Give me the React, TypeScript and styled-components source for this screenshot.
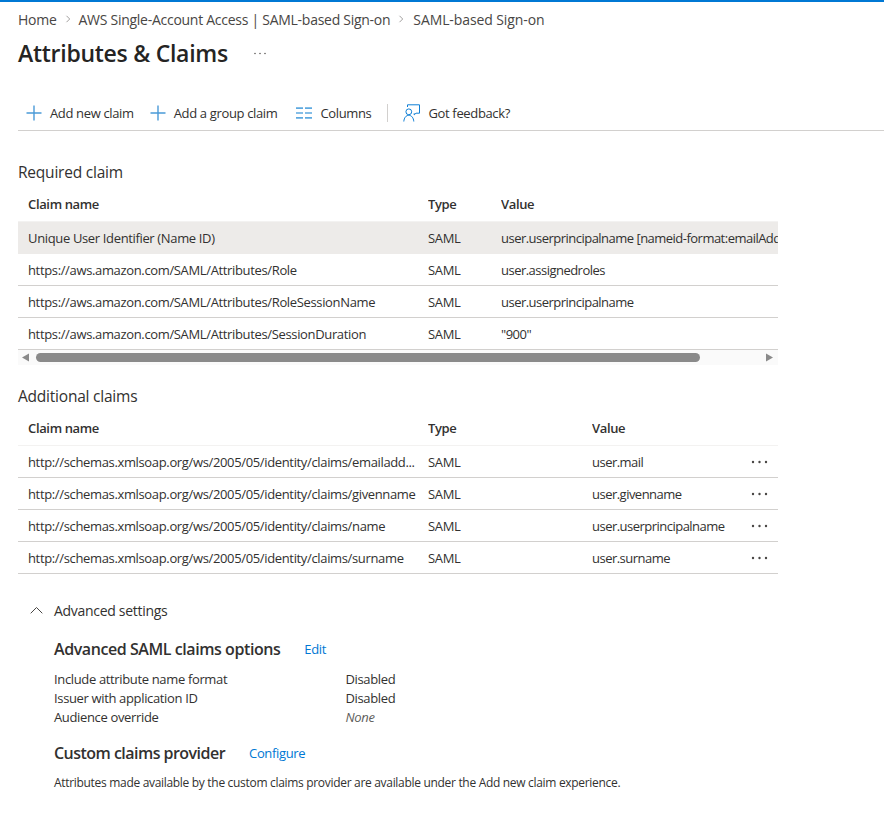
import styled, { createGlobalStyle } from "styled-components";

const GlobalStyle = createGlobalStyle`
  html, body {
    margin: 0;
    background: #fff;
  }
  body {
    font-family: "Open Sans", "Noto Sans", "Liberation Sans", sans-serif;
    font-size: 13px;
    letter-spacing: -0.35px;
    color: #323130;
  }
`;

const Page = styled.div`
  width: 884px;
  height: 816px;
  overflow: hidden;
  border-top: 2px solid #0078d4;
  box-sizing: border-box;
`;
const Breadcrumb = styled.nav`
  display: flex;
  align-items: center;
  height: 18px;
  padding: 8px 0 0 18px;
  color: #484644;
  font-size: 14px;
  letter-spacing: -0.27px;
`;
const Chevron = styled.svg`
  width: 6px;
  height: 8px;
  margin: 0 8px;
`;
const LastCrumb = styled.span`
  margin-left: 1px;
  letter-spacing: -0.1px;
`;
const TitleRow = styled.div`
  display: flex;
  align-items: center;
  padding: 5px 0 0 18px;
  height: 40px;
`;
const Title = styled.h1`
  margin: 0;
  font-size: 23px;
  font-weight: 600;
  letter-spacing: -0.27px;
  color: #252423;
`;
const TitleMore = styled.svg`
  width: 12px;
  height: 3px;
  margin-left: 26px;
`;
const Toolbar = styled.div`
  display: flex;
  align-items: center;
  height: 35px;
  margin: 22px 0 0 18px;
  padding-left: 8px;
  border-bottom: 1px solid #d2d0ce;
`;
const ToolButton = styled.div<{ $after: number }>`
  display: flex;
  align-items: center;
  gap: 8px;
  margin-right: ${(p) => p.$after}px;
  color: #323130;
  svg {
    flex: none;
  }
`;
const ToolDivider = styled.div`
  width: 1px;
  height: 18px;
  background: #d2d0ce;
  margin-right: 15px;
`;
const Content = styled.main`
  padding: 31px 0 0 18px;
  width: 760px;
`;
const SectionTitle = styled.h2`
  margin: 0 0 2px;
  font-size: 15.5px;
  font-weight: 400;
  line-height: 20px;
  color: #323130;
  letter-spacing: -0.22px;
`;
const Row = styled.div<{ $columns: string; $header?: boolean; $selected?: boolean }>`
  display: grid;
  grid-template-columns: ${(p) => p.$columns};
  align-items: center;
  height: ${(p) => (p.$header ? "35px" : "31px")};
  padding: ${(p) => (p.$header ? "2px" : "0")} 0 0 10px;
  border-bottom: 1px solid ${(p) => (p.$selected ? "#edebe9" : p.$header ? "#f3f2f1" : "#d2d0ce")};
  background: ${(p) => (p.$selected ? "#edebe9" : "transparent")};
  font-weight: ${(p) => (p.$header ? 600 : 400)};
  white-space: nowrap;
  overflow: hidden;
`;
const Cell = styled.div`
  overflow: hidden;
  white-space: nowrap;
`;
const ValueCell = styled(Cell)`
  letter-spacing: -0.52px;
`;
const MoreDots = styled.svg`
  width: 17px;
  height: 4px;
  display: block;
  justify-self: start;
`;
const ScrollBar = styled.div`
  display: flex;
  align-items: center;
  height: 15px;
  background: #fafafa;
  padding: 0 4px 0 3px;
  margin-bottom: 21px;
`;
const ScrollArrow = styled.svg`
  width: 9px;
  height: 9px;
  flex: none;
`;
const ScrollTrack = styled.div`
  flex: 1;
  margin: 0 0 0 6px;
`;
const ScrollThumb = styled.div`
  width: 664px;
  height: 9px;
  border-radius: 5px;
  background: #8a8a8a;
`;
const Advanced = styled.section`
  padding-left: 12px;
  margin-top: 26px;
`;
const ExpandRow = styled.div`
  display: flex;
  align-items: center;
  gap: 11px;
  height: 20px;
  font-size: 14px;
  letter-spacing: -0.3px;
`;
const Details = styled.div`
  padding: 17px 0 0 24px;
`;
const OptionHeading = styled.div`
  display: flex;
  align-items: center;
  height: 24px;
`;
const OptionTitle = styled.h3`
  margin: 0;
  font-size: 16px;
  font-weight: 600;
  letter-spacing: -0.43px;
  color: #323130;
  margin-right: 24px;
`;
const CustomTitle = styled(OptionTitle)`
  letter-spacing: -0.53px;
`;
const Link = styled.a`
  color: #0078d4;
  font-size: 13px;
`;
const OptionGrid = styled.dl`
  display: grid;
  grid-template-columns: 291.5px 1fr;
  grid-auto-rows: 19px;
  align-items: center;
  margin: 8px 0 15px;
  dt, dd {
    margin: 0;
  }
`;
const NoneValue = styled.dd`
  font-style: italic;
  color: #605e5c;
`;
const Note = styled.p`
  margin: 10px 0 0;
  font-size: 12px;
  line-height: 16px;
  letter-spacing: -0.31px;
`;

const RightChevron = () => (
  <Chevron viewBox="0 0 6 8">
    <path d="M1.5 .8 4.7 4 1.5 7.2" fill="none" stroke="#8a8886" strokeWidth="0.8" />
  </Chevron>
);
const PlusIcon = () => (
  <svg width="16" height="16" viewBox="0 0 16 16">
    <path d="M8 .5v15M.5 8h15" stroke="#4a9ad8" strokeWidth="1.4" fill="none" />
  </svg>
);
const ColumnsIcon = () => (
  <svg width="16" height="12" viewBox="0 0 16 12">
    <path d="M0 1.200h7M9 1.200h7M0 6h7M9 6h7M0 10.800h7M9 10.800h7" stroke="#5ea9e0" strokeWidth="1.700" fill="none" />
  </svg>
);
const FeedbackIcon = () => (
  <svg width="17" height="18" viewBox="0 0 17 18" fill="none" stroke="#0f7fd6" strokeWidth="1">
    <path d="M4.500 3V.8h12v8.400h-3.500l-1.800 1.700V9.200" />
    <circle cx="5.800" cy="7.800" r="2.900" />
    <path d="M.8 17.500c.3-3.800 2.300-6.200 5-6.200s4.700 2.400 5 6.200" />
  </svg>
);
const Dots = () => (
  <MoreDots viewBox="0 0 17 4">
    <circle cx="2" cy="2" r="1.200" fill="#484644" />
    <circle cx="8.500" cy="2" r="1.200" fill="#484644" />
    <circle cx="15" cy="2" r="1.200" fill="#484644" />
  </MoreDots>
);

const requiredColumns = "400px 73px 1fr";
const additionalColumns = "400px 164px 159px 1fr";

const requiredRows = [
  ["https://aws.amazon.com/SAML/Attributes/Role", "user.assignedroles"],
  ["https://aws.amazon.com/SAML/Attributes/RoleSessionName", "user.userprincipalname"],
  ["https://aws.amazon.com/SAML/Attributes/SessionDuration", '"900"'],
];
const additionalRows = [
  ["http://schemas.xmlsoap.org/ws/2005/05/identity/claims/emailadd...", "user.mail"],
  ["http://schemas.xmlsoap.org/ws/2005/05/identity/claims/givenname", "user.givenname"],
  ["http://schemas.xmlsoap.org/ws/2005/05/identity/claims/name", "user.userprincipalname"],
  ["http://schemas.xmlsoap.org/ws/2005/05/identity/claims/surname", "user.surname"],
];

const App = () => {
  return (
    <>
      <GlobalStyle />
      <Page>
        <Breadcrumb>
          <span>Home</span>
          <RightChevron />
          <span>AWS Single-Account Access | SAML-based Sign-on</span>
          <RightChevron />
          <LastCrumb>SAML-based Sign-on</LastCrumb>
        </Breadcrumb>
        <TitleRow>
          <Title>Attributes &amp; Claims</Title>
          <TitleMore viewBox="0 0 12 3">
            <circle cx="1" cy="1.500" r="0.800" fill="#605e5c" />
            <circle cx="6" cy="1.500" r="0.800" fill="#605e5c" />
            <circle cx="11" cy="1.500" r="0.800" fill="#605e5c" />
          </TitleMore>
        </TitleRow>
        <Toolbar>
          <ToolButton $after={16}><PlusIcon />Add new claim</ToolButton>
          <ToolButton $after={19}><PlusIcon />Add a group claim</ToolButton>
          <ToolButton $after={16}><ColumnsIcon />Columns</ToolButton>
          <ToolDivider />
          <ToolButton $after={0}><FeedbackIcon />Got feedback?</ToolButton>
        </Toolbar>
        <Content>
          <SectionTitle>Required claim</SectionTitle>
          <Row $header $columns={requiredColumns}>
            <Cell>Claim name</Cell>
            <Cell>Type</Cell>
            <Cell>Value</Cell>
          </Row>
          <Row $selected $columns={requiredColumns}>
            <Cell>Unique User Identifier (Name ID)</Cell>
            <Cell>SAML</Cell>
            <ValueCell>user.userprincipalname [nameid-format:emailAddress]</ValueCell>
          </Row>
          {requiredRows.map(([name, value]) => (
            <Row key={name} $columns={requiredColumns}>
              <Cell>{name}</Cell>
              <Cell>SAML</Cell>
              <ValueCell>{value}</ValueCell>
            </Row>
          ))}
          <ScrollBar>
            <ScrollArrow viewBox="0 0 9 9"><path d="M1 4.500 8 .5v8z" fill="#8a8a8a" /></ScrollArrow>
            <ScrollTrack><ScrollThumb /></ScrollTrack>
            <ScrollArrow viewBox="0 0 9 9"><path d="M8 4.500 1 .5v8z" fill="#8a8a8a" /></ScrollArrow>
          </ScrollBar>
          <SectionTitle>Additional claims</SectionTitle>
          <Row $header $columns={additionalColumns}>
            <Cell>Claim name</Cell>
            <Cell>Type</Cell>
            <Cell>Value</Cell>
          </Row>
          {additionalRows.map(([name, value]) => (
            <Row key={name} $columns={additionalColumns}>
              <Cell>{name}</Cell>
              <Cell>SAML</Cell>
              <ValueCell>{value}</ValueCell>
              <Dots />
            </Row>
          ))}
          <Advanced>
            <ExpandRow>
              <svg width="13" height="8" viewBox="0 0 13 8">
                <path d="M.7 7.300 6.500 1.500l5.800 5.800" fill="none" stroke="#484644" strokeWidth="1" />
              </svg>
              Advanced settings
            </ExpandRow>
            <Details>
              <OptionHeading>
                <OptionTitle>Advanced SAML claims options</OptionTitle>
                <Link>Edit</Link>
              </OptionHeading>
              <OptionGrid>
                <dt>Include attribute name format</dt>
                <dd>Disabled</dd>
                <dt>Issuer with application ID</dt>
                <dd>Disabled</dd>
                <dt>Audience override</dt>
                <NoneValue>None</NoneValue>
              </OptionGrid>
              <OptionHeading>
                <CustomTitle>Custom claims provider</CustomTitle>
                <Link>Configure</Link>
              </OptionHeading>
              <Note>Attributes made available by the custom claims provider are available under the Add new claim experience.</Note>
            </Details>
          </Advanced>
        </Content>
      </Page>
    </>
  );
};
export default App;
